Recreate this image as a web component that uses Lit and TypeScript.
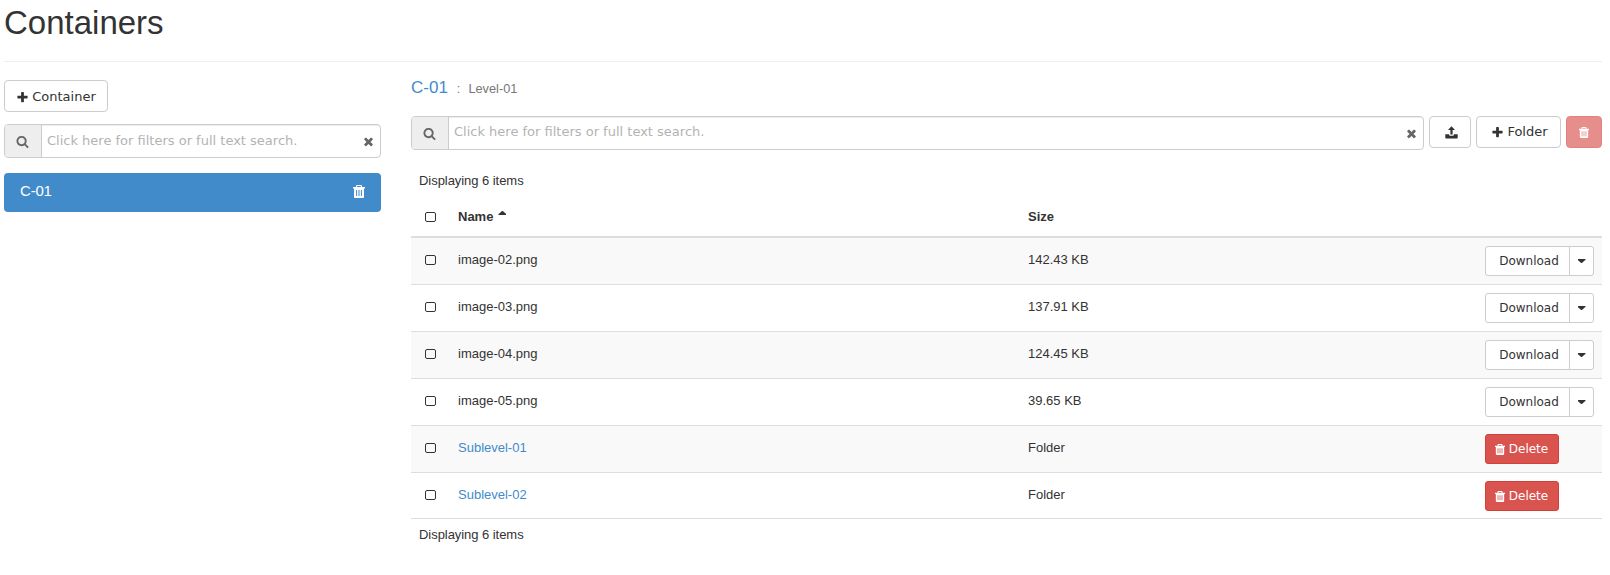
import { LitElement, html, css, svg } from "lit";
import { customElement, property, state } from "lit/decorators.js";

const ICONS: Record<string, { box: string; d: string }> = {
  plus: { box: "0 0 1792 1792", d: "M1600 736v192q0 40-28 68t-68 28h-416v416q0 40-28 68t-68 28h-192q-40 0-68-28t-28-68v-416h-416q-40 0-68-28t-28-68v-192q0-40 28-68t68-28h416v-416q0-40 28-68t68-28h192q40 0 68 28t28 68v416h416q40 0 68 28t28 68z" },
  search: { box: "0 0 1792 1792", d: "M1216 832q0-185-131.5-316.5t-316.5-131.5-316.5 131.5-131.5 316.5 131.5 316.5 316.5 131.5 316.5-131.5 131.5-316.5zm512 832q0 52-38 90t-90 38q-54 0-90-38l-343-342q-179 124-399 124-143 0-273.5-55.5t-225-150-150-225-55.5-273.5 55.5-273.5 150-225 225-150 273.5-55.5 273.5 55.5 225 150 150 225 55.5 273.5q0 220-124 399l343 343q37 37 37 90z" },
  times: { box: "0 0 1792 1792", d: "M1490 1322q0 40-28 68l-136 136q-28 28-68 28t-68-28l-294-294-294 294q-28 28-68 28t-68-28l-136-136q-28-28-28-68t28-68l294-294-294-294q-28-28-28-68t28-68l136-136q28-28 68-28t68 28l294 294 294-294q28-28 68-28t68 28l136 136q28 28 28 68t-28 68l-294 294 294 294q28 28 28 68z" },
  trash: { box: "0 0 12 13", d: "M4 0h4q1 0 1 1v1h3v1.6h-1V12q0 1-1 1H2q-1 0-1-1V3.6H0V2h3V1q0-1 1-1zM4.2 1v1h3.6V1zM3.1 5v6h1V5zM5.5 5v6h1V5zM7.9 5v6h1V5z" },
  upload: { box: "0 0 13 13", d: "M6.500 .3L10 4.100H7.600V8.600H5.400V4.100H3zM.3 8.300H4.200V9q0 .8.8.8H8q.8 0 .8-.8V8.300H12.700V11.700q0 .8-.8.8H1.100q-.8 0-.8-.8z" },
};

@customElement("ui-icon")
class UiIcon extends LitElement {
  @property() name = "plus";
  static styles = css`
    :host { display: block; width: 13px; height: 13px; flex: none; }
    svg { display: block; width: 100%; height: 100%; fill: currentColor; fill-rule: evenodd; }
  `;
  render() {
    const icon = ICONS[this.name];
    return html`<svg viewBox=${icon.box}>${svg`<path d=${icon.d}></path>`}</svg>`;
  }
}

@customElement("search-bar")
class SearchBar extends LitElement {
  static styles = css`
    :host { display: block; }
    .bar { display: flex; height: 34px; box-sizing: border-box; border: 1px solid #ccc; border-radius: 4px; overflow: hidden;
      background: #fff; color: #666; }
    .addon { width: 36px; background: #eee; border-right: 1px solid #ccc; display: flex; align-items: center; justify-content: center; flex: none; }
    .addon ui-icon { margin: 1px 1px 0 0; }
    .field { flex: 1; display: flex; align-items: center; justify-content: space-between; padding: 0 5px;
      box-shadow: inset 0 1px 1px rgba(0,0,0,.075); }
    .hint { font: 13px/18px "DejaVu Sans", sans-serif; color: #b3b3b3; white-space: nowrap; margin-bottom: var(--hint-lift, 2px); }
    .clear { margin-top: 1px; }
  `;
  render() {
    return html`<div class="bar">
      <div class="addon"><ui-icon name="search"></ui-icon></div>
      <div class="field"><span class="hint">Click here for filters or full text search.</span><ui-icon class="clear" name="times"></ui-icon></div>
    </div>`;
  }
}

interface Item { name: string; size: string; folder?: boolean }

@customElement("app-root")
class AppRoot extends LitElement {
  @state() items: Item[] = [
    { name: "image-02.png", size: "142.43 KB" },
    { name: "image-03.png", size: "137.91 KB" },
    { name: "image-04.png", size: "124.45 KB" },
    { name: "image-05.png", size: "39.65 KB" },
    { name: "Sublevel-01", size: "Folder", folder: true },
    { name: "Sublevel-02", size: "Folder", folder: true },
  ];
  static styles = css`
    :host { display: block; height: 575px; box-sizing: border-box; padding: 0 8px 0 4px; background: #fff; color: #333;
      font: 13px/18px "Liberation Sans", Arial, sans-serif; overflow: hidden; }
    * { box-sizing: border-box; }
    h1 { margin: 0; height: 62px; padding-top: 4px; font-size: 33px; line-height: 37px; font-weight: 400; border-bottom: 1px solid #eee; }
    .columns { display: grid; grid-template-columns: 377px 1191px; column-gap: 30px; }
    .side { padding-top: 18px; --hint-lift: 0px; }
    .btn { display: inline-flex; align-items: center; justify-content: center; gap: 3px; height: 32px; border: 1px solid #ccc; border-radius: 4px;
      background: #fff; color: #333; font: 13px/18px "DejaVu Sans", sans-serif; padding: 0; white-space: nowrap; }
    .add { width: 104px; padding-top: 2px; }
    .side search-bar { margin-top: 12px; }
    .entry { margin-top: 15px; height: 39px; border-radius: 4px; background: #428bca; color: #fff; font-size: 15px; letter-spacing: -.2px;
      display: flex; justify-content: space-between; padding: 9px 16px 0 16px; }
    .entry ui-icon { width: 12px; height: 13px; margin-top: 3px; }
    .main { padding-top: 14px; }
    .crumbs { display: flex; align-items: baseline; height: 40px; line-height: 24px; color: #777; font-size: 12.75px; }
    .crumbs a { font-size: 17px; }
    .sep { margin: 0 8px 0 9px; }
    a { color: #428bca; }
    .tools { display: grid; grid-template-columns: 1013px 42px 85px 36px; column-gap: 5px; }
    .send { padding-left: 3px; }
    .new { padding-left: 2px; }
    .danger { background: #d9534f; border-color: #d43f3a; color: #fff; }
    .btn.danger ui-icon { width: 10px; height: 11px; }
    .faded { opacity: .65; }
    .count { padding: 22px 8px 0; height: 45px; }
    .row { display: grid; grid-template-columns: 47px 570px 457px 1fr; height: 47px; border-top: 1px solid #ddd; }
    .row > * { padding-top: 13px; }
    .row:nth-child(odd) { background: #f9f9f9; }
    .row:first-child { border-top: 0; height: 46px; }
    .row:last-child { border-bottom: 1px solid #ddd; }
    .head.row { height: 43px; border-top: 0; background: #fff; border-bottom: 2px solid #ddd; font-weight: 700; }
    .check { padding-left: 14px; }
    .box { display: block; width: 11px; height: 10px; border: 1px solid #333; border-radius: 2px; margin: 4px 0 0; }
    .name { display: flex; gap: 5px; }
    .up { width: 8px; height: 4px; background: #333; clip-path: polygon(0 100%, 0 80%, 45% 0, 55% 0, 100% 80%, 100% 100%); margin-top: 3px; }
    .down { width: 8px; height: 4px; background: #333; clip-path: polygon(0 0, 100% 0, 100% 20%, 55% 100%, 45% 100%, 0 20%); }
    .row > .acts { padding-top: 8px; display: flex; align-items: flex-start; }
    .sm { height: 30px; font-size: 12px; border-radius: 3px; }
    .dl { width: 85px; border-radius: 3px 0 0 3px; padding-left: 3px; }
    .tog { width: 25px; margin-left: -1px; border-radius: 0 3px 3px 0; }
    .del { width: 74px; gap: 4px; padding-right: 1px; }
    .foot { padding: 7px 8px 0; }
    .count, .foot { letter-spacing: -.05px; }
  `;
  row(i: Item) {
    return html`<div class="row">
      <div class="check"><span class="box"></span></div>
      <div class="name">${i.folder ? html`<a>${i.name}</a>` : html`<span>${i.name}</span>`}</div>
      <div>${i.size}</div>
      <div class="acts">${i.folder
        ? html`<button class="btn sm danger del"><ui-icon name="trash"></ui-icon>Delete</button>`
        : html`<button class="btn sm dl">Download</button><button class="btn sm tog"><span class="down"></span></button>`}</div>
    </div>`;
  }
  render() {
    return html`
      <h1>Containers</h1>
      <div class="columns">
        <div class="side">
          <button class="btn add"><ui-icon name="plus"></ui-icon>Container</button>
          <search-bar></search-bar>
          <div class="entry"><span>C-01</span><ui-icon name="trash"></ui-icon></div>
        </div>
        <div class="main">
          <div class="crumbs"><a>C-01</a><span class="sep">:</span><span>Level-01</span></div>
          <div class="tools">
            <search-bar></search-bar>
            <button class="btn send"><ui-icon name="upload"></ui-icon></button>
            <button class="btn new"><ui-icon name="plus"></ui-icon>Folder</button>
            <button class="btn danger faded"><ui-icon name="trash"></ui-icon></button>
          </div>
          <div class="count">Displaying 6 items</div>
          <div class="row head">
            <div class="check"><span class="box"></span></div>
            <div class="name">Name<span class="up"></span></div>
            <div>Size</div>
          </div>
          <div>${this.items.map((i) => this.row(i))}</div>
          <div class="foot">Displaying 6 items</div>
        </div>
      </div>`;
  }
}
